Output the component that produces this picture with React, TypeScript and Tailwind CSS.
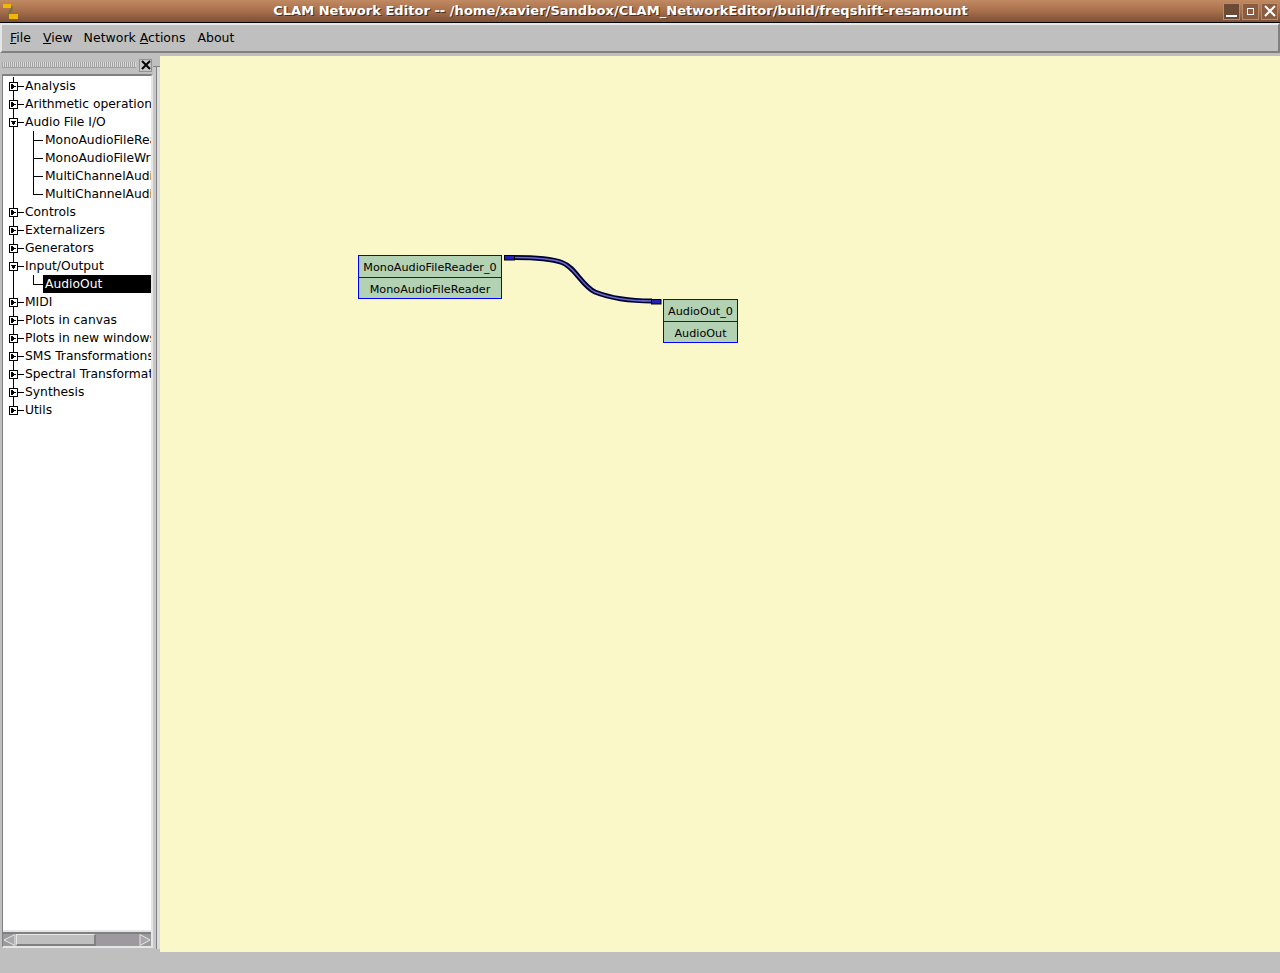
import React from "react";

type Row = { label: string; kind: "closed" | "open" | "child" | "lastchild"; selected?: boolean; last?: boolean; };

const rows: Row[] = [
  { label: "Analysis", kind: "closed" },
  { label: "Arithmetic operations", kind: "closed" },
  { label: "Audio File I/O", kind: "open" },
  { label: "MonoAudioFileReader", kind: "child" },
  { label: "MonoAudioFileWriter", kind: "child" },
  { label: "MultiChannelAudioFileReader", kind: "child" },
  { label: "MultiChannelAudioFileWriter", kind: "lastchild" },
  { label: "Controls", kind: "closed" },
  { label: "Externalizers", kind: "closed" },
  { label: "Generators", kind: "closed" },
  { label: "Input/Output", kind: "open" },
  { label: "AudioOut", kind: "lastchild", selected: true },
  { label: "MIDI", kind: "closed" },
  { label: "Plots in canvas", kind: "closed" },
  { label: "Plots in new windows", kind: "closed" },
  { label: "SMS Transformations", kind: "closed" },
  { label: "Spectral Transformations", kind: "closed" },
  { label: "Synthesis", kind: "closed" },
  { label: "Utils", kind: "closed", last: true },
];

// tree connectors + expander box, 43px wide
const TreeGlyph = ({ row }: { row: Row }) => {
  const { kind, last } = row;
  const isTop = kind === "closed" || kind === "open";
  return (
    <svg width="43" height="18" className="shrink-0" shapeRendering="crispEdges">
      {isTop ? (
        <>
          <path d={last ? "M10.5 0V9" : "M10.5 0V18"} stroke="#000" fill="none" />
          <path d="M15 9.5H21" stroke="#000" fill="none" />
          <rect x="6.5" y="5.5" width="8" height="8" fill="#fff" stroke="#000" />
          {kind === "closed" ? (
            <path d="M8 6.5L8 12.5L13 9.5Z" fill="#000" />
          ) : (
            <path d="M7.5 7.5L13.5 7.5L10.5 12.5Z" fill="#000" />
          )}
        </>
      ) : (
        <>
          <path d="M10.5 0V18" stroke="#000" fill="none" />
          <path d={kind === "child" ? "M30.5 0V18M30 9.5H40" : "M30.5 0V9.5H40"} stroke="#000" fill="none" />
        </>
      )}
    </svg>
  );
};

const NetNode = ({ title, type, className }: { title: string; type: string; className: string }) => (
  <div className={`absolute border border-[#0000ff] bg-[#b3d1b3] text-[11.2px] text-black ${className}`}>
    <div className="h-[22px] pt-[3px] border-b border-[#0a3a0a] flex items-center justify-center leading-none">{title}</div>
    <div className="h-[20px] pt-[3px] flex items-center justify-center leading-none">{type}</div>
  </div>
);

const WinButton = ({ children, dark }: { children: React.ReactNode; dark?: boolean }) => (
  <div className={`w-[17px] h-[17px] border border-[#b98a6c] flex items-center justify-center ${dark ? "bg-[#6b4a36]" : "bg-[#8a5c40]"}`}>
    {children}
  </div>
);

const WIRE = "M14 7.5C30 7.5 50 8 62 12.5C75 17 82 36 95 42C110 48 130 51 152 51";

export default function App() {
  return (
    <div className="w-[1280px] h-[973px] overflow-hidden flex flex-col bg-[#bfbfbf] text-[12.5px] text-black font-['DejaVu_Sans',sans-serif]">
      {/* title bar */}
      <div className="h-[23px] shrink-0 flex items-center relative border-b border-black bg-gradient-to-b from-[#c08a62] via-[#a86f4b] to-[#7c5038]">
        <svg width="20" height="20" viewBox="0 0 20 20" className="ml-[2px] shrink-0">
          <path d="M7 5C15 7 2 12 10 15" stroke="#5c7a3c" strokeWidth="2" fill="none" />
          <rect x="1" y="3" width="8" height="4" fill="#f2b705" />
          <rect x="7" y="13" width="9" height="5" fill="#f2b705" />
        </svg>
        <div className="flex-1 text-center font-bold text-[13px] text-white pr-[4px] tracking-[0.035px] [text-shadow:1px_1px_0_#4a2e1c]">
          CLAM Network Editor -- /home/xavier/Sandbox/CLAM_NetworkEditor/build/freqshift-resamount
        </div>
        <div className="flex gap-[2px] mr-[2px]">
          <WinButton dark>
            <div className="w-[11px] h-[2px] bg-white mt-[9px]" />
          </WinButton>
          <WinButton>
            <div className="w-[7px] h-[7px] border border-white" />
          </WinButton>
          <WinButton>
            <svg width="12" height="12" viewBox="0 0 12 12">
              <path d="M1 1L11 11M11 1L1 11" stroke="#fff" strokeWidth="2" />
            </svg>
          </WinButton>
        </div>
      </div>

      {/* menu bar */}
      <div className="h-[30px] shrink-0 border-t-2 border-l-2 border-[#e6e6e6] border-b-2 border-r-2 border-b-[#808080] border-r-[#808080] flex items-center pl-[8px] gap-[12px] bg-[#bfbfbf]">
        <span><u>F</u>ile</span>
        <span><u>V</u>iew</span>
        <span className="-ml-[1px]">Network <u>A</u>ctions</span>
        <span>About</span>
      </div>

      <div className="flex-1 flex min-h-0 mt-[3px]">
        {/* dock */}
        <div className="w-[153px] shrink-0 flex flex-col pb-[4px]">
          <div className="h-[18px] shrink-0 flex items-center pl-[2px]">
            <div className="w-[134px] h-[6px] border-b border-[#a0a0a0] bg-[repeating-linear-gradient(90deg,#a4a4a4_0_1px,#d8d8d8_1px_2px)]" />
            <div className="ml-[3px] w-[13px] h-[13px] border border-[#909090] bg-[#c8c8c8] flex items-center justify-center">
              <svg width="10" height="10" viewBox="0 0 10 10">
                <path d="M1 1L9 9M9 1L1 9" stroke="#000" strokeWidth="2" />
              </svg>
            </div>
          </div>
          <div className="flex-1 min-h-0 ml-[2px] flex flex-col border-t-2 border-l border-[#808080] border-r-2 border-r-[#e6e6e6] border-b-2 border-b-[#e6e6e6]">
            <div className="flex-1 min-h-0 bg-white overflow-hidden pt-[1px] border-b-2 border-[#e6e6e6] text-[12.3px]">
              {rows.map((row) => (
                <div key={row.label} className="h-[18px] flex items-center overflow-hidden whitespace-nowrap">
                  <TreeGlyph row={row} />
                  {row.kind === "closed" || row.kind === "open" ? (
                    <span className="-ml-[21px]">{row.label}</span>
                  ) : (
                    <span className={`flex-1 h-[18px] leading-[18px] pl-[2px] -ml-[3px] ${row.selected ? "bg-black text-white" : ""}`}>
                      {row.label}
                    </span>
                  )}
                </div>
              ))}
            </div>
            {/* horizontal scrollbar */}
            <div className="h-[14px] shrink-0 border-t-2 border-[#808080] bg-[#9c9a9f] flex items-center">
              <svg width="13" height="12" viewBox="0 0 13 12" className="shrink-0">
                <path d="M12 0.5L1 6L12 11.5Z" fill="#a8a8a8" stroke="#e6e6e6" />
              </svg>
              <div className="w-[80px] h-[12px] shrink-0 bg-[#bfbfbf] border-t border-l border-[#e6e6e6] border-r-2 border-b-2 border-r-[#808080] border-b-[#808080]" />
              <div className="flex-1" />
              <svg width="12" height="12" viewBox="0 0 12 12" className="shrink-0">
                <path d="M1 0.5L11 6L1 11.5Z" fill="#a8a8a8" stroke="#e6e6e6" />
              </svg>
            </div>
          </div>
        </div>

        {/* splitter */}
        <div className="w-[7px] shrink-0 flex flex-col pb-[3px]">
          <div className="h-[11px] shrink-0 border-b border-[#808080] bg-[#bfbfbf]" />
          <div className="flex-1 flex">
            <div className="w-[4px] bg-[#c8c8c8] border-r border-[#808080]" />
            <div className="w-[3px] bg-[#dcdcdc]" />
          </div>
        </div>

        {/* canvas */}
        <div className="flex-1 relative bg-[#faf8c8] overflow-hidden">
          <NetNode title="MonoAudioFileReader_0" type="MonoAudioFileReader" className="left-[198px] top-[199px] w-[144px]" />
          <NetNode title="AudioOut_0" type="AudioOut" className="left-[503px] top-[243px] w-[75px]" />
          <svg width="170" height="60" viewBox="0 0 170 60" className="absolute left-[340px] top-[194px]">
            <path d={WIRE} fill="none" stroke="#000033" strokeWidth="5" />
            <path d={WIRE} fill="none" stroke="#6a6ac8" strokeWidth="1.4" />
            <rect x="4.5" y="5.5" width="10" height="4.5" fill="#2222bb" stroke="#000" />
            <rect x="151.5" y="49.5" width="9.5" height="4.5" fill="#2222bb" stroke="#000" />
          </svg>
        </div>
      </div>
      <div className="h-[21px] shrink-0 bg-[#bfbfbf]" />
    </div>
  );
}
